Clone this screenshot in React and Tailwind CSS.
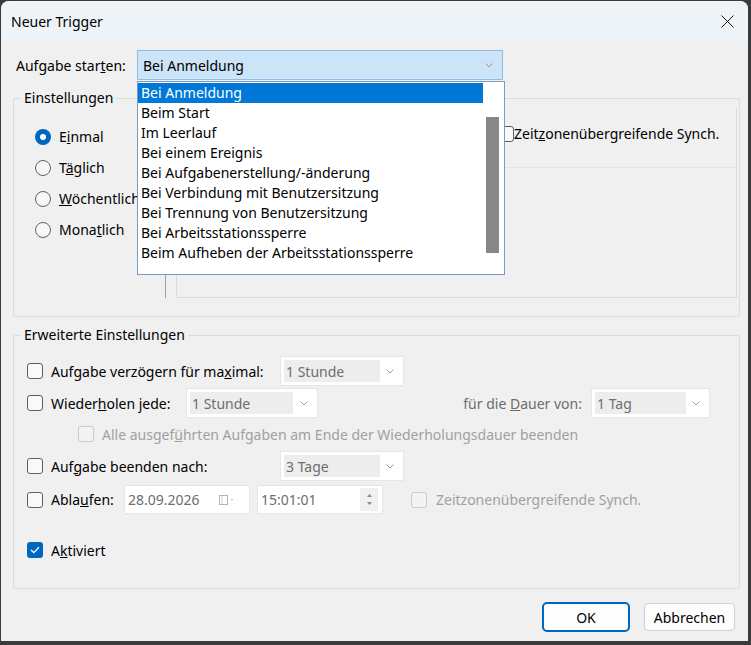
import React from "react";

const font = { fontFamily: '"Noto Sans", "Open Sans", sans-serif' };

const triggers = [
  "Bei Anmeldung",
  "Beim Start",
  "Im Leerlauf",
  "Bei einem Ereignis",
  "Bei Aufgabenerstellung/-änderung",
  "Bei Verbindung mit Benutzersitzung",
  "Bei Trennung von Benutzersitzung",
  "Bei Arbeitsstationssperre",
  "Beim Aufheben der Arbeitsstationssperre",
];

const Chevron = ({ className = "" }) => (
  <svg width="8" height="5" viewBox="0 0 8 5" className={className}>
    <path d="M0.5 0.5 L4 4 L7.5 0.5" fill="none" stroke="#9a9a9a" strokeWidth="1" />
  </svg>
);

const Radio = ({ checked }) =>
  checked ? (
    <span className="flex h-[16px] w-[16px] items-center justify-center rounded-full bg-[#0067c0]">
      <span className="h-[6px] w-[6px] rounded-full bg-white" />
    </span>
  ) : (
    <span className="h-[16px] w-[16px] rounded-full border border-[#616161] bg-[#f7f7f7]" />
  );

const Check = ({ checked, disabled }) =>
  checked ? (
    <span className="flex h-[16px] w-[16px] items-center justify-center rounded-[3px] bg-[#0067c0]">
      <svg width="10" height="8" viewBox="0 0 10 8">
        <path d="M1 4 L3.8 6.6 L9 1.2" fill="none" stroke="white" strokeWidth="1.3" />
      </svg>
    </span>
  ) : (
    <span
      className={`h-[16px] w-[16px] shrink-0 rounded-[3px] border ${
        disabled ? "border-[#cbcbcb] bg-[#f3f3f3]" : "border-[#5f5f5f] bg-[#f9f9f9]"
      }`}
    />
  );

const DisabledCombo = ({ value, width, textWidth }) => (
  <div
    className="flex h-[30px] shrink-0 items-center border border-[#e6e6e6] bg-white p-[3px]"
    style={{ width }}
  >
    <div className="flex h-full items-center bg-[#ededed] pl-[2px] text-[#6d6d6d]" style={{ width: textWidth }}>
      {value}
    </div>
    <div className="flex flex-1 items-center justify-center">
      <Chevron />
    </div>
  </div>
);

export default function App() {
  return (
    <div className="h-[645px] w-[751px] bg-[#3a3a3a] pb-[4px] pl-px pr-[3px] pt-px text-[14px] text-black" style={font}>
      <div className="flex h-full flex-col overflow-hidden rounded-t-[8px] bg-[#f0f0f0]">
        <div className="flex h-[40px] shrink-0 items-center justify-between bg-[#eef3f8] pl-[10px] pr-[14px]">
          <span className="text-[14px]">Neuer Trigger</span>
          <svg width="13" height="13" viewBox="0 0 13 13">
            <path d="M0.5 0.5 L12.5 12.5 M12.5 0.5 L0.5 12.5" stroke="#1a1a1a" strokeWidth="1" />
          </svg>
        </div>

        <div className="relative flex-1 pl-[12px] pt-[9px]">
          <div className="flex items-center">
            <span className="w-[124px] pl-[3px]">
              Aufgabe star<u>t</u>en:
            </span>
            <div className="flex h-[30px] w-[366px] items-center justify-between border border-[#90bde6] bg-[#cce4f7] pl-[5px] pr-[9px]">
              <span>Bei Anmeldung</span>
              <Chevron />
            </div>
          </div>

          <fieldset className="mt-[8px] h-[229px] w-[727px] rounded-[2px] border border-[#dcdcdc]">
            <legend className="ml-[7px] px-[3px] leading-[20px]">Einstellungen</legend>
            <div className="flex h-[190px] pl-[21px]">
              <div className="flex w-[130px] flex-col pt-[13px]">
                {[
                  ["E", "i", "nmal", true],
                  ["T", "ä", "glich", false],
                  ["", "W", "öchentlich", false],
                  ["Mona", "t", "lich", false],
                ].map(([a, u, b, c]) => (
                  <div key={a + u + b} className="flex h-[31px] items-center gap-[8px]">
                    <Radio checked={c} />
                    <span className="whitespace-nowrap">
                      {a}
                      <u>{u}</u>
                      {b}
                    </span>
                  </div>
                ))}
              </div>
              <div className="mt-[2px] w-px self-stretch bg-[#a0a0a0]" />
              <div className="ml-[10px] mr-[2px] flex flex-1 flex-col border-x border-b border-[#dcdcdc]">
                <div className="flex h-[60px] items-center border-b border-[#e3e3e3] pb-[8px] pl-[321px]">
                  <Check />
                  <span>
                    Zeit<u>z</u>onenübergreifende Synch.
                  </span>
                </div>
              </div>
            </div>
          </fieldset>

          <fieldset className="mt-[8px] h-[264px] w-[727px] rounded-[2px] border border-[#dcdcdc] pl-[13px]">
            <legend className="-ml-[6px] px-[3px] leading-[20px]">Erweiterte Einstellungen</legend>
            <div className="mt-[11px] flex h-[30px] items-center">
              <Check />
              <span className="ml-[8px] w-[229px]">
                Aufgabe verzögern für ma<u>x</u>imal:
              </span>
              <DisabledCombo value="1 Stunde" width={124} textWidth={96} />
            </div>
            <div className="mt-[2px] flex h-[30px] items-center">
              <Check />
              <span className="ml-[8px] w-[135px]">
                Wieder<u>h</u>olen jede:
              </span>
              <DisabledCombo value="1 Stunde" width={132} textWidth={103} />
              <span className="w-[273px] pr-[9px] text-right text-[#6d6d6d]">
                für die <u>D</u>auer von:
              </span>
              <DisabledCombo value="1 Tag" width={119} textWidth={91} />
            </div>
            <div className="mt-px flex h-[30px] items-center pl-[51px] text-[#a0a0a0]">
              <Check disabled />
              <span className="ml-[8px]">
                Alle ausgef<u>ü</u>hrten Aufgaben am Ende der Wiederholungsdauer beenden
              </span>
            </div>
            <div className="mt-[2px] flex h-[30px] items-center">
              <Check />
              <span className="ml-[8px] w-[229px]">
                Auf<u>g</u>abe beenden nach:
              </span>
              <DisabledCombo value="3 Tage" width={124} textWidth={96} />
            </div>
            <div className="mt-[4px] flex h-[29px] items-center">
              <Check />
              <span className="ml-[8px] w-[73px]">
                Abla<u>u</u>fen:
              </span>
              <div className="flex h-[29px] w-[126px] items-center border border-[#e6e6e6] bg-white pl-[3px] text-[#6d6d6d]">
                <span className="flex-1">28.09.2026</span>
                <svg width="18" height="10" viewBox="0 0 18 10" className="mr-[12px]">
                  <rect x="0.5" y="0.5" width="8" height="9" fill="none" stroke="#b5b5b5" />
                  <line x1="3" y1="1" x2="3" y2="9" stroke="#d0d0d0" />
                  <path d="M12 4.5 L14 4.5" stroke="#b5b5b5" />
                </svg>
              </div>
              <div className="ml-[7px] flex h-[29px] w-[126px] items-center border border-[#e6e6e6] bg-white pl-[3px] text-[#6d6d6d]">
                <span className="flex-1">15:01:01</span>
                <div className="mr-[4px] flex h-[23px] w-[18px] flex-col items-center justify-center gap-[5px] bg-[#f0f0f0]">
                  <svg width="5" height="3" viewBox="0 0 5 3">
                    <path d="M0 3 L2.5 0 L5 3 Z" fill="#8a8a8a" />
                  </svg>
                  <svg width="5" height="3" viewBox="0 0 5 3">
                    <path d="M0 0 L2.5 3 L5 0 Z" fill="#8a8a8a" />
                  </svg>
                </div>
              </div>
              <div className="ml-[28px] flex items-center text-[#a0a0a0]">
                <Check disabled />
                <span className="ml-[9px]">Zeitzonenübergreifende Synch.</span>
              </div>
            </div>
            <div className="mt-[25px] flex h-[22px] items-center">
              <Check checked />
              <span className="ml-[8px]">
                A<u>k</u>tiviert
              </span>
            </div>
          </fieldset>

          <div className="mt-[13px] flex justify-end gap-[14px] pr-[13px]">
            <button className="h-[30px] w-[88px] rounded-[5px] border-2 border-[#0067c0] bg-[#fdfdfd]">OK</button>
            <button className="mt-px h-[28px] w-[91px] rounded-[4px] border border-[#d0d0d0] bg-[#fdfdfd]">
              Abbrechen
            </button>
          </div>

          <div className="absolute left-[136px] top-[40px] flex h-[194px] w-[368px] border border-[#7a9cc2] bg-white">
            <div className="flex-1 pt-px">
              {triggers.map((t, i) => (
                <div
                  key={t}
                  className={`h-[20px] pl-[3px] leading-[20px] ${i === 0 ? "bg-[#0078d7] text-white" : ""}`}
                >
                  {t}
                </div>
              ))}
            </div>
            <div className="w-[21px] px-[3px] pt-[35px]">
              <div className="h-[136px] w-[13px] bg-[#878787]" />
            </div>
          </div>
        </div>
      </div>
    </div>
  );
}
